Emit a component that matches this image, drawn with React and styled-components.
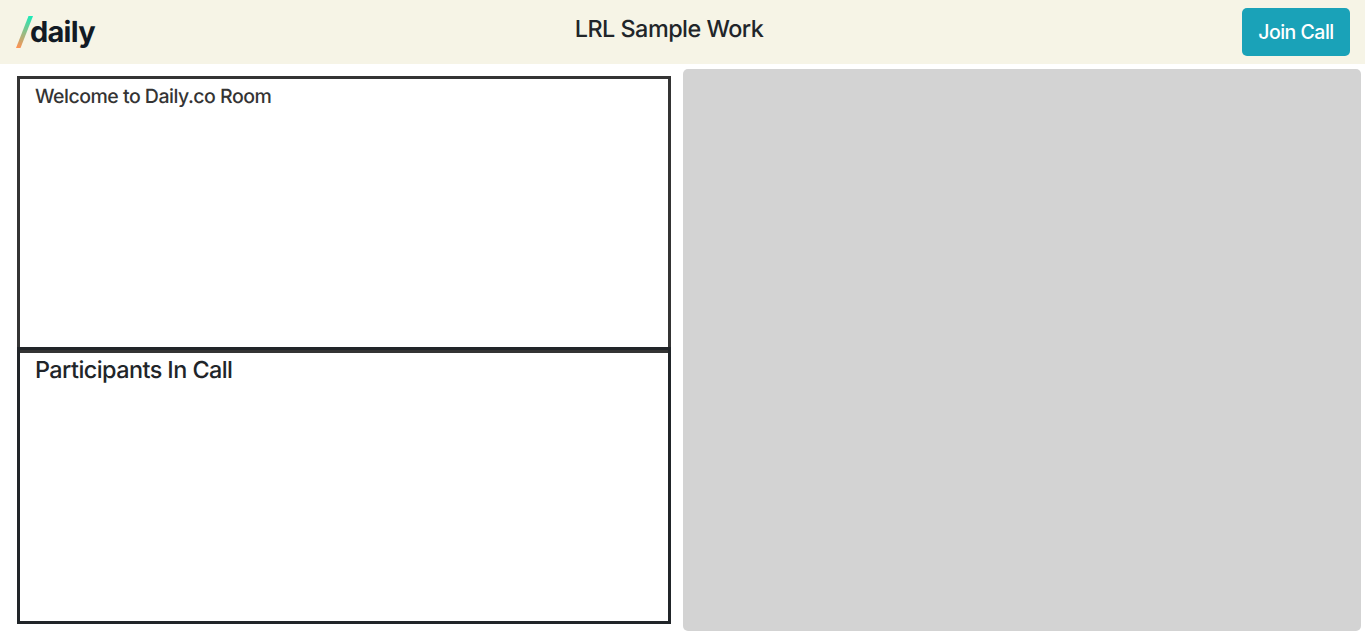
import React from "react";
import styled, { createGlobalStyle } from "styled-components";

const GlobalStyle = createGlobalStyle`
  *, *::before, *::after { box-sizing: border-box; }
  body {
    margin: 0;
    background: #fff;
    color: #212529;
    font-family: Inter, "Liberation Sans", sans-serif;
    font-weight: 500;
    -webkit-font-smoothing: antialiased;
    text-rendering: geometricPrecision;
  }
`;

const Page = styled.div`
  height: 638px;
  display: flex;
  flex-direction: column;
  overflow: hidden;
`;

const Header = styled.header`
  height: 64px;
  flex: none;
  display: flex;
  justify-content: space-between;
  align-items: flex-start;
  padding: 8px 15px 8px 16px;
  background: #f6f4e6;
`;

const Logo = styled.svg`
  display: block;
  width: 80px;
  height: 32px;
  margin-top: 8px;
  overflow: visible;
`;

const Wordmark = styled.text`
  font-size: 29px;
  font-weight: 700;
  letter-spacing: -0.7px;
  fill: #121a24;
`;

const Title = styled.h1`
  margin: 6px 0 0;
  font-size: 23.4px;
  line-height: 29px;
  font-weight: 540;
  letter-spacing: -0.52px;
  white-space: nowrap;
`;

const JoinButton = styled.button`
  width: 108px;
  height: 48px;
  padding: 0;
  border: 0;
  border-radius: 5px;
  background: #1aa2b8;
  color: #fff;
  font: 460 19.5px/30px Inter, "Liberation Sans", sans-serif;
  letter-spacing: -0.5px;
`;

const Main = styled.main`
  flex: 1;
  display: grid;
  grid-template-columns: 654px 678px;
  column-gap: 12px;
  padding: 5px 4px 7px 17px;
`;

const Sidebar = styled.div`
  display: flex;
  flex-direction: column;
  padding-top: 7px;
`;

const Panel = styled.section`
  height: 277px;
  padding: 0 15px;
  border: 3px solid ${(p) => p.$tone};
  color: ${(p) => p.$tone};

  & + & { margin-top: -6px; }
`;

const PanelTitle = styled.h2`
  margin: 5px 0 0;
  font-size: ${(p) => (p.$large ? 23.4 : 19.5)}px;
  line-height: ${(p) => (p.$large ? 29 : 24)}px;
  letter-spacing: ${(p) => (p.$large ? -0.55 : -0.5)}px;
  font-weight: 540;
  white-space: nowrap;
`;

const VideoArea = styled.section`
  height: 562px;
  border-radius: 5px;
  background: #d3d3d3;
`;

function DailyLogo() {
  return (
    <Logo viewBox="0 0 80 32" role="img" aria-label="daily">
      <defs>
        <linearGradient id="slash" x1="14" y1="0" x2="3" y2="32" gradientUnits="userSpaceOnUse">
          <stop offset="0" stopColor="#1bebb9" />
          <stop offset="1" stopColor="#ff9254" />
        </linearGradient>
      </defs>
      <path d="M12.5 0H17L4.5 32H0Z" fill="url(#slash)" />
      <Wordmark x="13.9" y="26">daily</Wordmark>
    </Logo>
  );
}

export default function App() {
  return (
    <>
      <GlobalStyle />
      <Page>
        <Header>
          <DailyLogo />
          <Title>LRL Sample Work</Title>
          <JoinButton type="button">Join Call</JoinButton>
        </Header>
        <Main>
          <Sidebar>
            <Panel $tone="#343434">
              <PanelTitle>Welcome to Daily.co Room</PanelTitle>
            </Panel>
            <Panel $tone="#212529">
              <PanelTitle $large>Participants In Call</PanelTitle>
            </Panel>
          </Sidebar>
          <VideoArea />
        </Main>
      </Page>
    </>
  );
}
